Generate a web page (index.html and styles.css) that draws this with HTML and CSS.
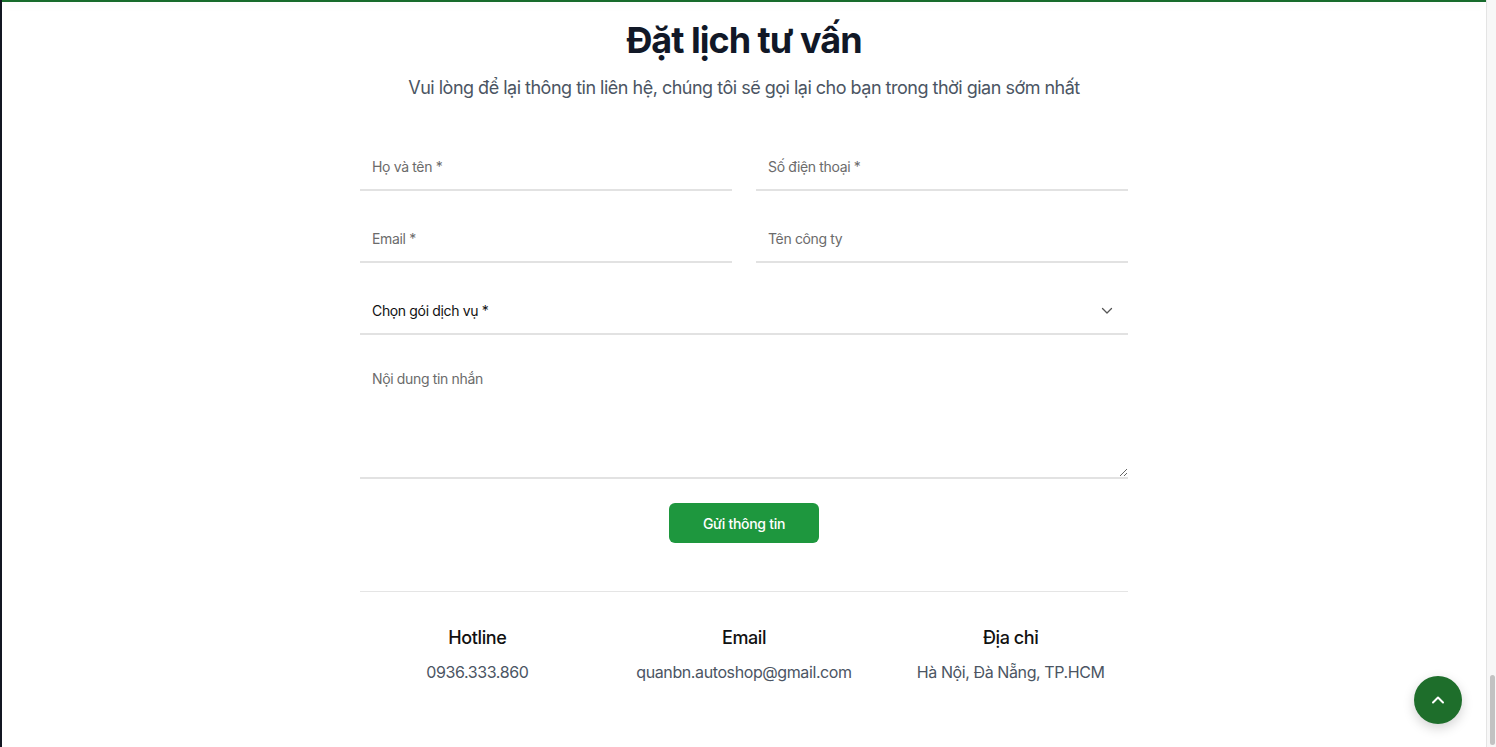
FILE: index.html
```html
<!DOCTYPE html>
<html lang="vi">
<head>
<meta charset="utf-8">
<title>Đặt lịch tư vấn</title>
<link rel="stylesheet" href="styles.css">
</head>
<body>
<div class="frame">
  <div class="viewport">
    <div class="topbar"></div>
    <main class="section">
      <h1 class="title">Đặt lịch tư vấn</h1>
      <p class="subtitle">Vui lòng để lại thông tin liên hệ, chúng tôi sẽ gọi lại cho bạn trong thời gian sớm nhất</p>
      <form class="form">
        <div class="grid">
          <input class="field" type="text" placeholder="Họ và tên *">
          <input class="field" type="text" placeholder="Số điện thoại *">
          <input class="field" type="email" placeholder="Email *">
          <input class="field" type="text" placeholder="Tên công ty">
        </div>
        <div class="select-wrap">
          <select class="field select">
            <option>Chọn gói dịch vụ *</option>
          </select>
          <svg class="chev" width="12" height="8" viewBox="0 0 12 8" aria-hidden="true"><path d="M1.5 1.5 L6 6 L10.5 1.5" fill="none" stroke="#555" stroke-width="1.3" stroke-linecap="round" stroke-linejoin="round"/></svg>
        </div>
        <textarea class="field area" placeholder="Nội dung tin nhắn"></textarea>
        <div class="actions">
          <button type="button" class="btn">Gửi thông tin</button>
        </div>
      </form>
      <div class="info">
        <div class="info-col">
          <h3 class="info-title">Hotline</h3>
          <p class="info-value">0936.333.860</p>
        </div>
        <div class="info-col">
          <h3 class="info-title">Email</h3>
          <p class="info-value">quanbn.autoshop@gmail.com</p>
        </div>
        <div class="info-col">
          <h3 class="info-title">Địa chỉ</h3>
          <p class="info-value">Hà Nội, Đà Nẵng, TP.HCM</p>
        </div>
      </div>
    </main>
    <button class="to-top" type="button" aria-label="Lên đầu trang">
      <svg width="20" height="20" viewBox="0 0 20 20"><path d="M5 12.5 L10 7.5 L15 12.5" fill="none" stroke="#fff" stroke-width="2" stroke-linecap="round" stroke-linejoin="round"/></svg>
    </button>
  </div>
  <div class="scrollbar"><div class="thumb"></div></div>
</div>
</body>
</html>
```
FILE: styles.css
```css
* { box-sizing: border-box; }
html, body { margin: 0; padding: 0; height: 100%; }
body {
  font-family: Inter, "Noto Sans", "Liberation Sans", sans-serif;
  color: #111827;
  background: #fff;
  overflow: hidden;
  letter-spacing: -0.025em;
}
.frame {
  display: flex;
  height: 747px;
  border-left: 2px solid #131722;
}
.viewport {
  position: relative;
  flex: 1;
  background: #fff;
}
.topbar {
  height: 2px;
  background: #176b2c;
  box-shadow: 0 2px 10px rgba(0,0,0,0.08);
}
.section {
  width: 768px;
  margin: 0 auto;
  padding-top: 18px;
}
.title {
  margin: 0;
  text-align: center;
  font-size: 36px;
  line-height: 40px;
  font-weight: 700;
  color: #111827;
  letter-spacing: -1px;
}
.subtitle {
  margin: 16px 0 0;
  text-align: center;
  font-size: 18px;
  line-height: 24px;
  color: #4b5563;
  letter-spacing: -0.5px;
}
.form {
  margin-top: 43px;
  display: flex;
  flex-direction: column;
  gap: 24px;
}
.grid {
  display: grid;
  grid-template-columns: 1fr 1fr;
  column-gap: 24px;
  row-gap: 24px;
}
.field {
  display: block;
  width: 100%;
  height: 48px;
  border: none;
  border-bottom: 2px solid #e2e2e2;
  border-radius: 0;
  background: transparent;
  padding: 0 12px;
  font-family: inherit;
  font-size: 14px;
  letter-spacing: -0.025em;
  color: #111;
  outline: none;
}
.field::placeholder { color: #6b6b6b; opacity: 1; }
.select-wrap { position: relative; }
.select {
  appearance: none;
  -webkit-appearance: none;
  color: #111;
}
.chev {
  position: absolute;
  right: 15px;
  top: 20px;
}
.area {
  height: 120px;
  padding: 10px 12px;
  line-height: 20px;
  resize: vertical;
}
.actions {
  display: flex;
  justify-content: center;
}
.btn {
  width: 150px;
  height: 40px;
  border: none;
  border-radius: 6px;
  background: #1e973e;
  color: #fff;
  font-family: inherit;
  font-size: 14px;
  font-weight: 500;
  letter-spacing: -0.02em;
}
.info {
  margin-top: 48px;
  border-top: 1px solid #e5e5e5;
  padding-top: 33px;
  display: grid;
  grid-template-columns: repeat(3, 1fr);
  column-gap: 32px;
  text-align: center;
}
.info-title {
  margin: 0;
  font-size: 18px;
  line-height: 26px;
  font-weight: 500;
  color: #111;
}
.info-value {
  margin: 9px 0 0;
  font-size: 16px;
  line-height: 24px;
  color: #4b5563;
}
.to-top {
  position: absolute;
  right: 24px;
  bottom: 23px;
  width: 48px;
  height: 48px;
  border-radius: 50%;
  border: none;
  background: #1e6e2b;
  box-shadow: 0 4px 12px rgba(0,0,0,0.18);
  display: flex;
  align-items: center;
  justify-content: center;
  padding: 0;
}
.scrollbar {
  width: 10px;
  flex: none;
  background: #f7f7f7;
  border-left: 1px solid #e4e4e4;
  display: flex;
  flex-direction: column;
  justify-content: flex-end;
  padding: 0 1px 2px 3px;
}
.thumb {
  height: 70px;
  background: #c2c2c2;
  border-radius: 3px;
}
```
